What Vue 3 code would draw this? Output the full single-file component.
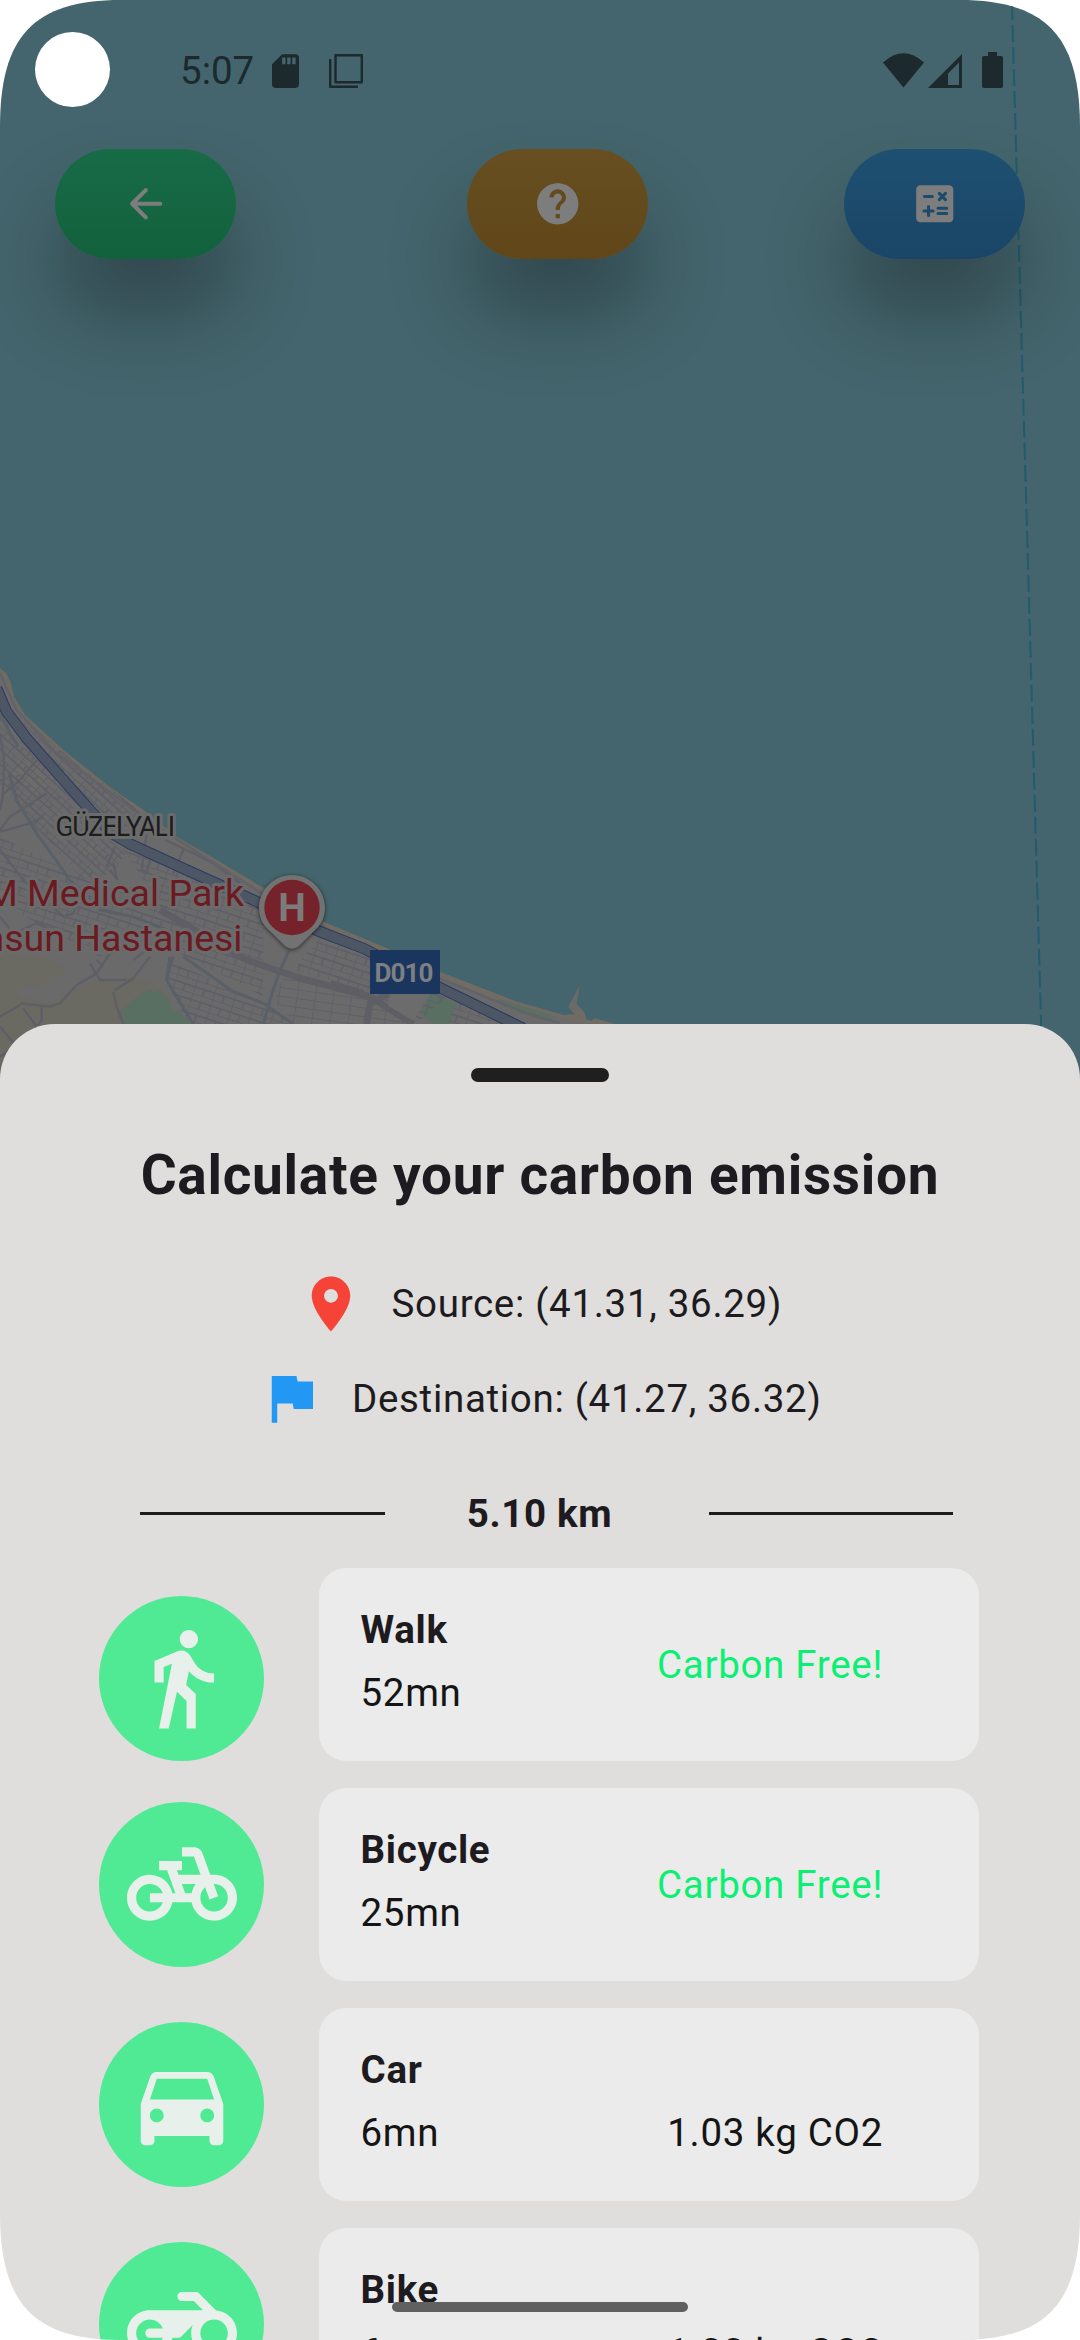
<script setup>
const transports = [
  {
    name: 'Walk', time: '52mn', free: true, value: 'Carbon Free!',
    icon: 'M13.5 5.5c1.1 0 2-.9 2-2s-.9-2-2-2-2 .9-2 2 .9 2 2 2zM9.8 8.9 7 23h2.1l1.8-8 2.1 2v6h2v-7.5l-2.1-2 .6-3C14.8 12 16.8 13 19 13v-2c-1.9 0-3.5-1-4.3-2.4l-1-1.6c-.56-.89-1.68-1.25-2.66-.84L6 8.3V13h2V9.6l1.8-.7z',
  },
  {
    name: 'Bicycle', time: '25mn', free: true, value: 'Carbon Free!',
    icon: 'M18.18 10l-1.7-4.68C16.19 4.53 15.44 4 14.6 4H12v2h2.6l1.46 4h-4.81l-.36-1H12V7H7v2h1.75l1.82 5H9.9c-.44-2.23-2.31-3.88-4.65-3.99C2.45 9.87 0 12.2 0 15c0 2.8 2.2 5 5 5 2.46 0 4.45-1.69 4.9-4h4.2c.44 2.23 2.31 3.88 4.65 3.99 2.8.13 5.25-2.19 5.25-5 0-2.8-2.2-5-5-5h-.82zM7.82 16c-.4 1.17-1.49 2-2.82 2-1.68 0-3-1.32-3-3s1.32-3 3-3c1.33 0 2.42.83 2.82 2H5v2h2.82zm6.28-2h-1.4l-.73-2H15c-.44.58-.76 1.25-.9 2zm4.9 4c-1.68 0-3-1.32-3-3 0-.93.41-1.73 1.05-2.28l.96 2.64 1.88-.68-.97-2.67c.03 0 .06-.01.08-.01 1.68 0 3 1.32 3 3s-1.32 3-3 3z',
  },
  {
    name: 'Car', time: '6mn', free: false, value: '1.03 kg CO2',
    icon: 'M18.92 6.01C18.72 5.42 18.16 5 17.5 5h-11c-.66 0-1.21.42-1.42 1.01L3 12v8c0 .55.45 1 1 1h1c.55 0 1-.45 1-1v-1h12v1c0 .55.45 1 1 1h1c.55 0 1-.45 1-1v-8l-2.08-5.99zM6.5 16c-.83 0-1.5-.67-1.5-1.5S5.67 13 6.5 13s1.5.67 1.5 1.5S7.33 16 6.5 16zm11 0c-.83 0-1.5-.67-1.5-1.5s.67-1.5 1.5-1.5 1.5.67 1.5 1.5-.67 1.5-1.5 1.5zM5 11l1.5-4.5h11L19 11H5z',
  },
  {
    name: 'Bike', time: '6mn', free: false, value: '1.00 kg CO2',
    icon: 'M19.44 9.03L15.7 5.29c-.19-.19-.44-.29-.7-.29H12c-.55 0-1 .45-1 1s.45 1 1 1h2.59l2 2H5c-2.8 0-5 2.2-5 5s2.2 5 5 5c2.46 0 4.45-1.69 4.9-4h1.24c.27 0 .52-.11.71-.29l2.48-2.48c-.22.54-.33 1.14-.33 1.77 0 2.8 2.2 5 5 5s5-2.2 5-5c0-2.65-1.97-4.77-4.56-4.97zM7.82 15C7.4 16.15 6.28 17 5 17c-1.63 0-3-1.37-3-3s1.37-3 3-3c1.28 0 2.4.85 2.82 2H5c-.55 0-1 .45-1 1s.45 1 1 1h2.82zM19 17c-1.66 0-3-1.34-3-3s1.34-3 3-3 3 1.34 3 3-1.34 3-3 3z',
  },
]
</script>

<template>
  <div class="screen">
    <svg class="map" viewBox="0 0 1080 1100" width="1080" height="1100">
      <defs>
        <pattern id="gridA" width="45" height="34" patternUnits="userSpaceOnUse" patternTransform="rotate(42)">
          <path d="M0 0H45M0 0V34M22 0V17M0 17H45" />
        </pattern>
        <pattern id="gridB" width="62" height="40" patternUnits="userSpaceOnUse" patternTransform="rotate(18)">
          <path d="M0 0H62M0 0V40M0 20H62M31 20V40" />
        </pattern>
        <pattern id="gridC" width="54" height="26" patternUnits="userSpaceOnUse" patternTransform="rotate(8)">
          <path d="M0 0H54M0 0V26" />
        </pattern>
        <clipPath id="land">
          <path d="M0 55L20 72L32 100L42 140L75 195L190 300L330 412L430 480L530 560L650 630L780 708L970 815L1160 895L1330 970L1550 1055L1690 1095L1725 1093L1705 1070L1739 1005L1730 1062L1752 1085L1760 1110L1775 1113L1783 1105L1840 1121L1840 1350H0Z" />
        </clipPath>
      </defs>
      <rect width="1080" height="1100" fill="#44656d" />
      <path d="M1011.9 3L1043 1090" stroke="#215b6c" stroke-width="2" stroke-dasharray="17 5" />
      <g transform="translate(0 650) scale(.33333)">
        <g clip-path="url(#land)" fill="none">
          <rect width="1900" height="1350" fill="#6b6a6b" />
          <path d="M0 55L20 72L32 100L42 140L75 195L190 300L330 412L430 480L530 560L650 630L780 708L970 815L1160 895L1330 970L1550 1055L1840 1121" stroke="#706c63" stroke-width="34" />
          <path d="M0 900L60 915L160 930L200 965L150 1000L60 1015L50 1040L150 1060L260 1000L350 990L390 980L470 1000L510 1040V1080L560 1122V1350H0Z" fill="#6a6962" />
          <path d="M362 1085L410 1040L450 1018L462 1030L475 1018L510 1055L515 1082L540 1084L570 1122L580 1200H400Z" fill="#596f61" />
          <path d="M1290 1030L1370 1062L1350 1122H1300L1258 1088L1275 1060Z" fill="#596f61" />
          <path d="M1490 1045L1590 1075L1670 1100L1640 1112L1560 1090L1500 1060Z" fill="#5d6f65" />
          <path d="M30 370L100 320L150 400L90 430ZM230 590L290 570L300 600L250 620Z" fill="#706d65" opacity=".5" />

          <!-- street blocks -->
          <path fill="url(#gridA)" d="M0 180L60 290L180 300L440 500L340 670L250 690L130 560L0 400Z" />
          <path fill="url(#gridA)" opacity=".7" d="M60 190L190 310L430 490L290 490L120 290L40 200Z" />
          <path fill="url(#gridB)" d="M0 560L200 660L500 750L560 920L480 880L300 920L150 840L0 760Z" />
          <path fill="url(#gridB)" d="M350 570L640 700L790 780V1040L560 920L430 690Z" />
          <path fill="url(#gridB)" d="M500 930L800 1060L880 1130H570L505 1010Z" />
          <path fill="url(#gridB)" d="M960 860L1110 910L1350 1030L1250 1122L1130 1030L880 960Z" />
          <path fill="url(#gridC)" d="M860 960L1120 1040L1240 1130H890L820 1050Z" />
          <path fill="url(#gridB)" d="M1370 1040L1480 1090V1130H1340Z" />

          <!-- local streets -->
          <g stroke="#5e5f66" stroke-width="7">
            <path d="M0 250L12 330L8 440L0 480M12 430L60 390L110 330M0 545L90 520L130 500M0 600L70 690L190 800L220 790L240 740M0 540L30 500L140 430M345 590L320 650M340 640L352 690L330 660M440 550L425 660L440 668L460 600M0 800L40 850L110 820L180 850M270 940L300 990L380 990M290 930L310 950M400 930L440 900M495 570L560 600L640 640L720 700M550 600L520 670" />
            <path d="M60 1060L150 1070L180 1060L230 1005L290 970L330 910L420 890M60 1065L0 1100M125 1070V1110L90 1160L0 1220M70 1075L110 1130M340 1025L350 1070L370 1122M345 1020L400 985L450 920M0 1130L50 1190M520 920L500 990L540 1060L580 1122" />
          </g>
          <g stroke="#5a6067" stroke-width="9">
            <path d="M0 190L30 250L55 290M28 370L50 450L110 550L160 620L210 690L300 780L400 800L500 840M550 920L650 990L700 1025L790 1060L880 1122M868 900L840 960L810 1050L790 1122M510 920L500 990L580 1122" />
          </g>
          <path d="M480 780L740 930L900 985L1110 1040L1240 1122M990 1000L1090 1030" stroke="#5e5e64" stroke-width="20" />
          <path d="M1170 1030L1110 1060L1100 1122" stroke="#5e5e64" stroke-width="20" />
          <path d="M1170 1032L1290 1032L1240 1112L1165 1068Z" fill="#6d6c6d" />
          <path d="M0 70L50 180L160 300L440 510L800 740L1080 890L1160 920L1330 990L1580 1090L1680 1120" stroke="#62636a" stroke-width="8" />

          <!-- coastal highway -->
          <path d="M-10 115L20 185L80 265L270 480L335 550L390 582L560 660L760 750L960 845L1090 895L1330 1018L1570 1135" stroke="#2d3a60" stroke-width="34" />
          <path d="M-10 115L20 185L80 265L270 480L335 550L390 582L560 660L760 750L960 845L1090 895L1330 1018L1570 1135" stroke="#4d5664" stroke-width="28" />
        </g>
      </g>

      <g>
        <text class="halo district" x="55.5" y="835.5" textLength="119.5">GÜZELYALI</text>
        <text class="halo hospital" x="244" y="906" text-anchor="end">M Medical Park</text>
        <text class="halo hospital" x="242.5" y="951" text-anchor="end">msun Hastanesi</text>
      </g>
      <g class="pin">
        <path d="M292 875c-18.2 0-33 14.8-33 33 0 10 4.500 18 11.500 23.500L284 945c5 5 11 5 16 0l13.500-13.500C320.500 926 325 918 325 908c0-18.200-14.800-33-33-33z" fill="#727272" />
      </g>
      <circle cx="292" cy="907.5" r="27.7" fill="#76222b" />
      <text class="pin-letter" x="292" y="920.5" text-anchor="middle">H</text>
      <rect x="370" y="950" width="70" height="44" fill="#1b365e" />
      <text class="road-no" x="374.5" y="982" textLength="59">D010</text>
    </svg>

    <header class="status">
      <div class="camera"></div>
      <span class="clock">5:07</span>
      <svg class="sd" viewBox="4 2 16 20" width="27" height="34">
        <path d="M18 2h-8L4 8v12c0 1.1.9 2 2 2h12c1.1 0 2-.9 2-2V4c0-1.1-.9-2-2-2zm-6 6h-2V4h2v4zm3 0h-2V4h2v4zm3 0h-2V4h2v4z" />
      </svg>
      <svg class="copy" viewBox="0 0 34 34" width="34" height="34">
        <path fill="none" stroke="#1c292d" stroke-width="2.4" stroke-linejoin="round" d="M6.500 1.200H32.800V28.200H6.500ZM1.200 5V32.800H29" />
      </svg>
      <svg class="wifi" viewBox="0 0 41 35" width="41" height="35">
        <path d="M0 9.500Q20.500-9 41 9.500L20.500 34.500Z" />
      </svg>
      <svg class="signal" viewBox="0 0 34 34" width="34" height="34">
        <path fill-rule="evenodd" d="M34 0V34H0ZM31 8.500L20 19.500V31H31Z" />
      </svg>
      <svg class="battery" viewBox="0 0 21 36" width="21" height="36">
        <path d="M6 0h9v4h4q2 0 2 2v28q0 2-2 2H2q-2 0-2-2V6q0-2 2-2h4z" />
      </svg>
    </header>

    <nav class="actions">
      <button class="action back">
        <svg viewBox="0 0 24 24"><path d="M19 11H7.83l4.88-4.88c.39-.39.39-1.03 0-1.42-.39-.39-1.02-.39-1.41 0l-6.59 6.59c-.39.39-.39 1.02 0 1.41l6.59 6.59c.39.39 1.02.39 1.41 0 .39-.39.39-1.02 0-1.41L7.83 13H19c.55 0 1-.45 1-1s-.45-1-1-1z" /></svg>
      </button>
      <button class="action help">
        <svg viewBox="0 0 24 24"><path d="M12 2C6.48 2 2 6.48 2 12s4.48 10 10 10 10-4.48 10-10S17.52 2 12 2zm1 17h-2v-2h2v2zm2.07-7.75l-.9.92C13.45 12.9 13 13.5 13 15h-2v-.5c0-1.100.45-2.100 1.170-2.830l1.240-1.260c.37-.36.59-.86.59-1.410 0-1.100-.9-2-2-2s-2 .9-2 2H8c0-2.210 1.790-4 4-4s4 1.790 4 4c0 .88-.36 1.680-.93 2.250z" /></svg>
      </button>
      <button class="action calc">
        <svg viewBox="0 0 24 24"><path d="M19 3H5c-1.1 0-2 .9-2 2v14c0 1.100.9 2 2 2h14c1.100 0 2-.9 2-2V5c0-1.100-.9-2-2-2z" /><path class="calc-signs" d="M7 8.500h3.800M14.200 7l3 3M17.200 7l-3 3M9 13.300v4.400M6.800 15.500h4.400M13.600 14.200h4.200M13.600 16.700h4.200" /></svg>
      </button>
    </nav>

    <main class="sheet">
      <div class="handle"></div>
      <h1>Calculate your carbon emission</h1>
      <div class="place">
        <svg viewBox="0 0 24 24" fill="#f64338"><path d="M12 2C8.13 2 5 5.13 5 9c0 5.250 7 13 7 13s7-7.750 7-13c0-3.870-3.130-7-7-7zm0 9.500c-1.380 0-2.500-1.120-2.500-2.500s1.120-2.500 2.500-2.500 2.500 1.120 2.500 2.500-1.120 2.500-2.500 2.500z" /></svg>
        <span>Source: (41.31, 36.29)</span>
      </div>
      <div class="place">
        <svg viewBox="0 0 24 24" fill="#2297f4"><path d="M14.4 6L14 4H5v17h2v-7h5.600l.4 2h7V6z" /></svg>
        <span>Destination: (41.27, 36.32)</span>
      </div>
      <div class="distance">
        <i></i><b>5.10 km</b><i></i>
      </div>
      <ul class="list">
        <li v-for="t in transports" :key="t.name">
          <div class="badge"><svg viewBox="0 0 24 24"><path :d="t.icon" /></svg></div>
          <section class="card">
            <div class="info"><strong>{{ t.name }}</strong><span>{{ t.time }}</span></div>
            <span class="value" :class="{ free: t.free }">{{ t.value }}</span>
          </section>
        </li>
      </ul>
    </main>
    <div class="home-bar"></div>
  </div>
</template>

<style>
body {
  margin: 0;
  background: #fff;
}
</style>

<style scoped>
.screen {
  position: relative;
  width: 1080px;
  height: 2340px;
  overflow: hidden;
  font-family: Roboto, 'Liberation Sans', sans-serif;
  color: #1d1b20;
  clip-path: path('M0 127C0 37 33 0 121 0H959C1047 0 1080 37 1080 127V2213C1080 2303 1047 2340 959 2340H121C33 2340 0 2303 0 2213Z');
}
.map {
  position: absolute;
  top: 0;
  left: 0;
}
pattern path {
  stroke: #5f6067;
  stroke-width: 5.5;
  fill: none;
}
.halo {
  stroke: #6b6b6c;
  stroke-width: 6px;
  stroke-linejoin: round;
  paint-order: stroke;
}
.district { font-size: 27px; fill: #1d1d1d; }
.hospital { font-size: 37.5px; fill: #6b1a22; }
.pin { filter: drop-shadow(0 1px 2px rgba(0, 0, 0, 0.6)); }
.pin-letter { font-size: 39px; font-weight: 700; fill: #7b7b7b; }
.road-no { font-size: 26px; font-weight: 700; fill: #7d7f83; }

.status {
  position: relative;
  display: flex;
  align-items: flex-start;
  height: 149px;
  fill: #1c292d;
}
.camera {
  width: 75px;
  height: 75px;
  margin: 32px 0 0 35px;
  border-radius: 50%;
  background: #fff;
}
.clock {
  width: 76px;
  margin: 48px 0 0 70px;
  font-size: 38.5px;
  line-height: 45px;
  color: #1c292d;
}
.sd { margin: 54px 0 0 16px; }
.copy { margin: 54px 0 0 30px; }
.wifi { margin: 53px 0 0 520px; }
.signal { margin: 54px 0 0 4px; }
.battery { margin: 52px 0 0 20px; }

.actions {
  position: relative;
  display: flex;
  height: 110px;
  padding-left: 55px;
}
.action {
  display: flex;
  align-items: center;
  justify-content: center;
  width: 181px;
  height: 110px;
  padding: 0;
  border: 0;
  border-radius: 55px;
  box-shadow: 0 55px 82px rgba(0, 0, 0, 0.3);
}
.action svg {
  width: 49.5px;
  height: 49.5px;
  fill: #7d7d7d;
}
.back { background: linear-gradient(#186b47, #12613c); }
.help { margin-left: 231px; background: linear-gradient(#674f22, #604618); }
.calc { margin-left: 196px; background: linear-gradient(#1e5072, #1a4566); }
.calc-signs {
  fill: none;
  stroke: #1c4b6c;
  stroke-width: 1.5;
  stroke-linecap: round;
}

.sheet {
  position: relative;
  box-sizing: border-box;
  height: 1316px;
  margin-top: 765px;
  padding-top: 44px;
  border-radius: 55px 55px 0 0;
  background: #dfdedc;
  font-size: 38.5px;
  line-height: 55px;
  letter-spacing: 0.69px;
}
.handle {
  width: 138px;
  height: 14px;
  margin: 0 auto;
  border-radius: 7px;
  background: #1f1f1f;
}
h1 {
  margin: 54px 0 56.5px;
  font-size: 55px;
  line-height: 78px;
  font-weight: 700;
  text-align: center;
}
.place {
  display: flex;
  justify-content: center;
  align-items: center;
  gap: 27.5px;
  height: 66px;
  margin-bottom: 28.5px;
}
.place svg {
  width: 66px;
  height: 66px;
}
.distance {
  display: flex;
  align-items: center;
  justify-content: space-between;
  height: 55px;
  margin: 54.5px 127px 0 140px;
}
.distance i {
  width: 244.5px;
  height: 3px;
  background: #1f1d1c;
}
.distance b {
  margin-right: 14px;
}
.list {
  margin: 27px 0 0;
  padding: 0;
  list-style: none;
}
.list li {
  display: flex;
  align-items: center;
  gap: 55px;
  height: 193px;
  margin: 0 101px 27px 99px;
}
.list li:first-child {
  align-items: flex-end;
}
.badge {
  display: flex;
  align-items: center;
  justify-content: center;
  width: 165px;
  height: 165px;
  border-radius: 50%;
  background: #50ea95;
}
.badge svg {
  width: 110px;
  height: 110px;
  fill: #e8f0eb;
}
.card {
  display: flex;
  align-items: flex-start;
  justify-content: space-between;
  flex: 1;
  box-sizing: border-box;
  height: 193px;
  padding: 34px 96px 0 41.5px;
  border-radius: 27.5px;
  background: #ebebeb;
}
.info {
  display: flex;
  flex-direction: column;
  gap: 8px;
}
.info span,
.value { color: #151515; }
.value {
  margin-top: 63px;
}
.value.free {
  margin-top: 35px;
  color: #0bf073;
}
.home-bar {
  position: absolute;
  left: 392px;
  top: 2302px;
  width: 296px;
  height: 10px;
  border-radius: 5px;
  background: #606060;
}
</style>
